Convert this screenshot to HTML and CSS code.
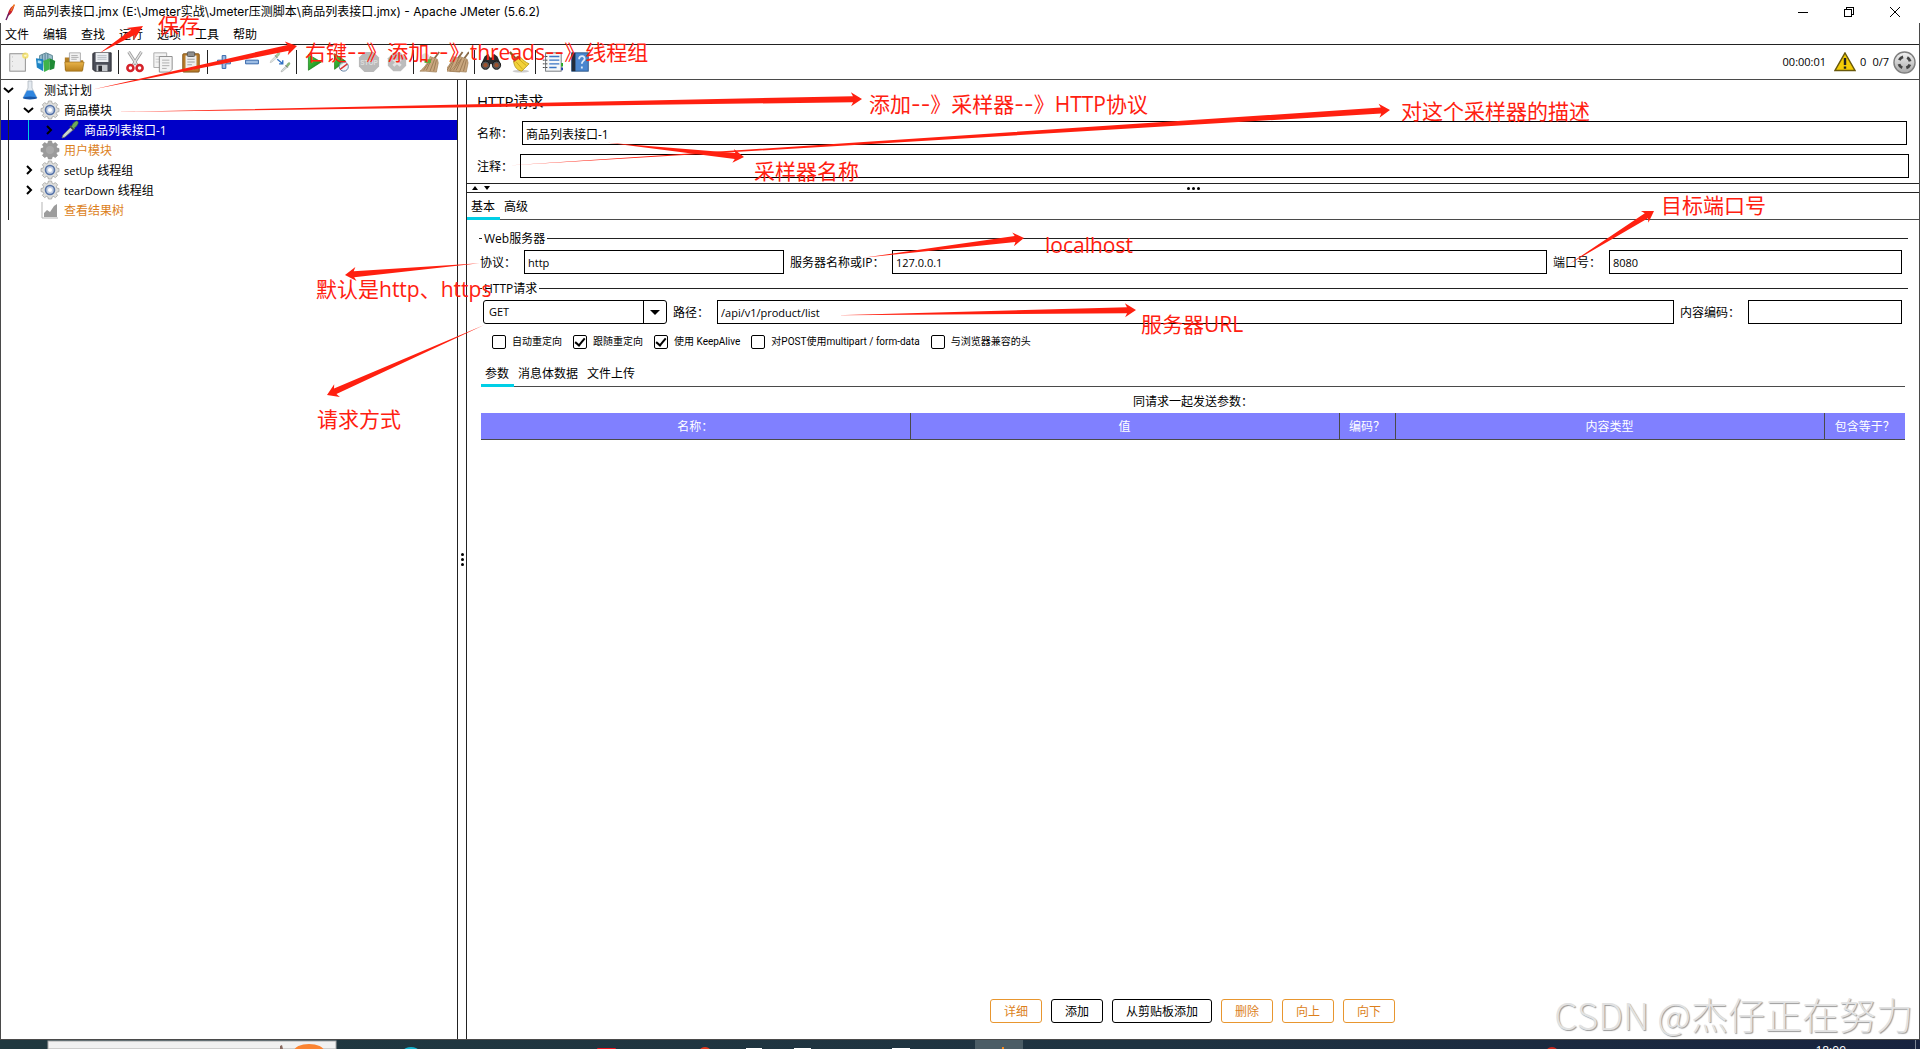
FILE: index.html
```html
<!DOCTYPE html>
<html lang="zh-CN">
<head>
<meta charset="utf-8">
<title>商品列表接口.jmx - Apache JMeter (5.6.2)</title>
<link rel="stylesheet" href="styles.css">
</head>
<body>
<svg width="0" height="0" class="defs" aria-hidden="true">
  <defs>
    <linearGradient id="steel" x1="0" y1="0" x2="0" y2="1"><stop offset="0" stop-color="#f4f4f4"/><stop offset="1" stop-color="#a9a9a9"/></linearGradient>
    <linearGradient id="gold" x1="0" y1="0" x2="0" y2="1"><stop offset="0" stop-color="#e9b44a"/><stop offset="1" stop-color="#b8801c"/></linearGradient>
    <linearGradient id="leaf" x1="0" y1="0" x2="1" y2="1"><stop offset="0" stop-color="#4fd04a"/><stop offset="1" stop-color="#0b7a0d"/></linearGradient>
    <symbol id="gear" viewBox="0 0 20 20">
      <g fill="#dededb" stroke="#9b9b98" stroke-width=".7">
        <path d="M8.4 1h3.2l.5 2.2 1.3.6 2-1.2 2.2 2.2-1.3 2 .6 1.3 2.1.4v3.1l-2.1.5-.6 1.4 1.3 1.9-2.2 2.2-2-1.2-1.3.6-.5 2H8.400l-.5-2-1.300-.6-2 1.200-2.200-2.200 1.300-1.900-.6-1.400L1 11.600V8.500l2.100-.4.6-1.300-1.300-2 2.200-2.200 2 1.200 1.300-.6z"/>
      </g>
      <circle cx="10" cy="10" r="4.500" fill="#c4d0e4" stroke="#5673a8" stroke-width="1.600"/>
      <circle cx="10" cy="10" r="2" fill="#fff"/>
    </symbol>
    <symbol id="gear-off" viewBox="0 0 20 20">
      <path fill="#9b9b9b" stroke="#8a8a8a" stroke-width=".6" d="M8.4 1h3.2l.5 2.2 1.3.6 2-1.2 2.2 2.2-1.3 2 .6 1.3 2.1.4v3.1l-2.1.5-.6 1.4 1.3 1.9-2.2 2.2-2-1.2-1.3.6-.5 2H8.400l-.5-2-1.300-.6-2 1.200-2.200-2.200 1.300-1.900-.6-1.400L1 11.600V8.500l2.100-.4.6-1.300-1.300-2 2.200-2.200 2 1.200 1.300-.6z"/>
      <circle cx="10" cy="10" r="4" fill="#a9a9a9"/>
    </symbol>
    <symbol id="dropper" viewBox="0 0 20 20">
      <path d="M2 18l1-3 9-9 2.500 2.500-9.500 8.500z" fill="#c9d6cf" stroke="#777" stroke-width=".8"/>
      <path d="M10 6l4 4" stroke="#444" stroke-width="1.800"/>
      <path d="M11.500 6.500c1-3 3-5 5-5.500 1.500 0 2 1 1.500 2.500-.7 2-2.500 4-4.500 5z" fill="#6fa95c" stroke="#3f7035" stroke-width=".6"/>
    </symbol>
    <symbol id="broom" viewBox="0 0 24 24">
      <path d="M22 1l-5 7" stroke="#8a6a48" stroke-width="2"/>
      <path d="M12 6l8 3 1 4-2 10-12-1-6 0c5-4 8-8 11-16z" fill="#c9a77f" stroke="#9a7850" stroke-width=".7"/>
      <path d="M14 8l-6 13M17 9l-5 13M19 10l-3 12M13 9l-8 12" stroke="#8d6c47" stroke-width=".8"/>
    </symbol>
  </defs>
</svg>

<div class="window">
  <header class="titlebar">
    <svg class="feather" viewBox="0 0 12 18"><path d="M10.500 2C7 3 4 8 3.500 13c3-1 6-5 7-11z" fill="#c8202e"/><path d="M10.500 1.500C9.500 3 8 5 7 8" stroke="#f07a22" stroke-width="1.500" fill="none"/><path d="M5 10l-3 7" stroke="#6a1a60" stroke-width="1.400"/></svg>
    <h1 class="title">商品列表接口.jmx (E:\Jmeter实战\Jmeter压测脚本\商品列表接口.jmx) - Apache JMeter (5.6.2)</h1>
    <button class="winbtn" aria-label="最小化"><svg viewBox="0 0 12 12"><path d="M1 6.500h10"/></svg></button>
    <button class="winbtn" aria-label="还原"><svg viewBox="0 0 12 12"><path d="M1.500 3.500h7v7h-7zM3.500 3.500v-2h7v7h-2"/></svg></button>
    <button class="winbtn" aria-label="关闭"><svg viewBox="0 0 12 12"><path d="M1 1l10 10M11 1L1 11"/></svg></button>
  </header>

  <div class="frame">
    <nav class="menubar">
      <button>文件</button><button>编辑</button><button>查找</button><button>运行</button><button>选项</button><button>工具</button><button>帮助</button>
    </nav>

    <div class="toolbar">
      <button class="tool" aria-label="新建"><svg viewBox="0 0 24 24"><rect x="3" y="3" width="17" height="19" fill="#eee" stroke="#888"/><path d="M6 6v14" stroke="#bbb" stroke-dasharray="1 4"/><circle cx="20" cy="5" r="3.500" fill="#f1dc5a" opacity=".8"/><circle cx="20" cy="5" r="1.300" fill="#fffbd0"/></svg></button>
      <button class="tool" aria-label="模板"><svg viewBox="0 0 24 24"><path d="M5 5l7-3 7 3v6H5z" fill="#9fc0ce" stroke="#58828f"/><path d="M8 4v6M11 3v7M14 3v7" stroke="#4f7c94"/><path d="M1 8l8 1v13l-7-4z" fill="#1d84c4"/><path d="M9 11l7-3v12l-6 3z" fill="#3fb34b"/><path d="M16 8l6 3-1 8-5 2z" fill="#1f8a35"/><path d="M3 10l4 1v3l-4-1z" fill="#a6dcf5"/></svg></button>
      <button class="tool" aria-label="打开"><svg viewBox="0 0 24 24"><path d="M2 7h7l2 3h11v11H2z" fill="#b47f25"/><path d="M7 2h12v12H7z" fill="#f2f2f2" stroke="#999" stroke-width=".8"/><path d="M9 5h7M9 7h8M9 9h6" stroke="#aaa"/><path d="M2 12h21l-2 10H3z" fill="url(#gold)" stroke="#9a6c18" stroke-width=".7"/></svg></button>
      <button class="tool" aria-label="保存"><svg viewBox="0 0 24 24"><path d="M3 2h19v20H4l-2-2V3z" fill="#4b4e58" stroke="#292b31"/><path d="M5 2h14v10H5z" fill="#eceff2"/><path d="M7 5h10M7 7h10M7 9h10" stroke="#b4bac2"/><path d="M6 15h12v7H6z" fill="#c5c8cc"/><path d="M8 16h4v6H8z" fill="#2c2e34"/></svg></button>
      <i class="sep"></i>
      <button class="tool" aria-label="剪切"><svg viewBox="0 0 24 24"><path d="M5 1l9 14M19 1l-9 14" stroke="#9a9a9a" stroke-width="3.200"/><path d="M5 1l9 14M19 1l-9 14" stroke="#e4e4e4" stroke-width="1.500"/><circle cx="7" cy="18.500" r="3.300" fill="none" stroke="#d5222a" stroke-width="2.800"/><circle cx="17" cy="18.500" r="3.300" fill="none" stroke="#d5222a" stroke-width="2.800"/></svg></button>
      <button class="tool" aria-label="复制"><svg viewBox="0 0 24 24"><path d="M2 2h14v16H2z" fill="#f3f3f3" stroke="#aaa"/><path d="M4 6h9M4 9h9M4 12h9" stroke="#ccc"/><path d="M8 6h14v14l-3 3H8z" fill="#f3f3f3" stroke="#888"/><path d="M11 10h8M11 13h8M11 16h8M11 19h5" stroke="#aaa"/></svg></button>
      <button class="tool" aria-label="粘贴"><svg viewBox="0 0 24 24"><rect x="3" y="3" width="18" height="20" rx="1" fill="#b97d2b" stroke="#7f5116"/><path d="M6 5h12v12l-3 3H6z" fill="#eee"/><rect x="8" y="1" width="8" height="5" rx="1" fill="#8f8f8f" stroke="#555"/><path d="M8 9h8M8 12h8M8 15h5" stroke="#999"/></svg></button>
      <i class="sep"></i>
      <button class="tool" aria-label="展开"><svg viewBox="0 0 24 24"><path d="M10 5h4v5h5v4h-5v5h-4v-5H5v-4h5z" fill="#9dbde4" stroke="#2c5ea5"/></svg></button>
      <button class="tool" aria-label="折叠"><svg viewBox="0 0 24 24"><path d="M5 10h14v4H5z" fill="#9dbde4" stroke="#2c5ea5"/></svg></button>
      <button class="tool" aria-label="切换"><svg viewBox="0 0 24 24"><g opacity=".6"><use href="#dropper" x="0" y="1" width="13" height="13"/></g><g opacity=".8"><use href="#dropper" x="12" y="12" width="12" height="12"/></g><path d="M9 9l6 5m0-4v4h-4" fill="none" stroke="#2f6fc4" stroke-width="1.500"/></svg></button>
      <i class="sep"></i>
      <button class="tool" aria-label="启动"><svg viewBox="0 0 24 24"><path d="M7 4l14 8-14 9z" fill="url(#leaf)" stroke="#087008" stroke-width=".7"/></svg></button>
      <button class="tool" aria-label="不停顿开始"><svg viewBox="0 0 24 24"><path d="M5 3l12 8-12 9z" fill="url(#leaf)" stroke="#087008" stroke-width=".7"/><circle cx="15" cy="17" r="5" fill="#e8eef4" fill-opacity=".7" stroke="#5e7fa2"/><path d="M11 20l8-6" stroke="#d33" stroke-width="1.500"/></svg></button>
      <button class="tool" aria-label="停止" disabled><svg viewBox="0 0 24 24"><path d="M7 1h10l6 6v10l-6 6H7l-6-6V7z" fill="#b9b9b9"/><text x="12" y="15" text-anchor="middle" class="stop-word">STOP</text></svg></button>
      <button class="tool" aria-label="关闭" disabled><svg viewBox="0 0 24 24"><path d="M8 2h8l6 6v8l-6 6H8l-6-6V8z" fill="#bcbcbc"/><path d="M8 9l8 7M16 9l-8 7" stroke="#e2e2e2" stroke-width="3"/></svg></button>
      <i class="sep"></i>
      <button class="tool" aria-label="清除"><svg viewBox="0 0 24 24"><use href="#broom" width="24" height="24"/><circle cx="7" cy="7" r="4.500" fill="#d7d7d7" opacity=".8"/><path d="M6 9h7v4H6z" fill="#5fae3b"/></svg></button>
      <button class="tool" aria-label="清除全部"><svg viewBox="0 0 24 24"><use href="#broom" x="-5" width="24" height="24"/><use href="#broom" x="2" width="24" height="24"/></svg></button>
      <i class="sep"></i>
      <button class="tool" aria-label="查找"><svg viewBox="0 0 24 24"><path d="M5 6l4-3 2 4h2l2-4 4 3 4 9-5 4-6-5-6 5-5-4z" fill="#2b2b2d"/><circle cx="6" cy="15.500" r="4.500" fill="#555" stroke="#111"/><circle cx="18" cy="15.500" r="4.500" fill="#555" stroke="#111"/><circle cx="6" cy="15.500" r="2.300" fill="#a0522d"/><circle cx="18" cy="15.500" r="2.300" fill="#a0522d"/></svg></button>
      <button class="tool" aria-label="重置查找"><svg viewBox="0 0 24 24"><path d="M2 1l6 7" stroke="#8a5f1c" stroke-width="2.500"/><ellipse cx="14" cy="22" rx="9" ry="1.500" fill="#ccc"/><path d="M6 11l7-5c3 4 6 6 10 8l-8 8c-5-1-8-4-9-11z" fill="#f2d23a" stroke="#a98a10" stroke-width=".8"/><path d="M9 12l7 8M12 9l8 7" stroke="#c9a51c"/><path d="M5 9l6-4 2 2-6 5z" fill="#c8462a"/></svg></button>
      <i class="sep"></i>
      <button class="tool" aria-label="函数助手"><svg viewBox="0 0 24 24"><rect x="5" y="2" width="17" height="20" fill="#f5f7f9" stroke="#6d7277"/><path d="M9 6h11M9 10h11M9 14h11M9 18h8" stroke="#3a75c4" stroke-width="1.400"/><path d="M2 6h5M2 10h5M2 14h5M2 18h5" stroke="#333" stroke-dasharray="2 1"/><path d="M22 13h2v4h-2z" fill="#2a2"/><path d="M22 18h2v3h-2z" fill="#24a"/></svg></button>
      <button class="tool" aria-label="帮助"><svg viewBox="0 0 24 24"><rect x="3" y="2" width="18" height="20" fill="#4a86cf" stroke="#285387"/><path d="M3 2h4v20H3z" fill="#222c3a"/><path d="M11 9c0-5 7-4 6 0-.5 2-3 2-3 5M14 17v2" fill="none" stroke="#dfebfa" stroke-width="2"/></svg></button>
      <div class="status">
        <span class="clock">00:00:01</span>
        <svg class="warn" viewBox="0 0 22 20"><path d="M11 1l10 17.500H1z" fill="#f3cc06" stroke="#69590a" stroke-width="1.500"/><path d="M11 6v7M11 14.500v2.200" stroke="#222" stroke-width="2.400"/></svg>
        <span class="errors">0</span>
        <span class="threads">0/7</span>
        <svg class="ring" viewBox="0 0 24 24"><circle cx="12" cy="12" r="11" fill="url(#steel)" stroke="#808080" stroke-width="1.500"/><circle cx="12" cy="12" r="6" fill="none" stroke="#444" stroke-width="3" stroke-dasharray="5 4.425" stroke-dashoffset="-2.200"/></svg>
      </div>
    </div>

    <main class="main">
      <aside class="tree">
        <div class="node"><svg class="twisty" viewBox="0 0 15 20"><path d="M3 8l4.500 4L12 8"/></svg><span class="pic"><svg viewBox="0 0 20 20"><path d="M8 1h4v7l5 10H3l5-10z" fill="#e4eaf0" stroke="#a8b0b8" stroke-width=".7"/><path d="M7 10.500h6L17 18H3z" fill="#2f86e0"/><ellipse cx="10" cy="18" rx="7" ry="1.500" fill="#1857a8"/></svg></span><span class="name-text">测试计划</span></div>
        <div class="node"><i class="guide"></i><svg class="twisty" viewBox="0 0 15 20"><path d="M3 8l4.500 4L12 8"/></svg><span class="pic"><svg><use href="#gear"/></svg></span><span class="name-text">商品模块</span></div>
        <div class="node selected"><i class="guide"></i><i class="guide near"></i><svg class="twisty" viewBox="0 0 15 20"><path d="M6 6l4 4-4 4"/></svg><span class="pic"><svg><use href="#dropper"/></svg></span><span class="name-text">商品列表接口-1</span></div>
        <div class="node disabled"><i class="guide"></i><i class="twisty"></i><span class="pic"><svg><use href="#gear-off"/></svg></span><span class="name-text">用户模块</span></div>
        <div class="node"><i class="guide"></i><svg class="twisty" viewBox="0 0 15 20"><path d="M6 6l4 4-4 4"/></svg><span class="pic"><svg><use href="#gear"/></svg></span><span class="name-text"><span class="latin">setUp</span> 线程组</span></div>
        <div class="node"><i class="guide"></i><svg class="twisty" viewBox="0 0 15 20"><path d="M6 6l4 4-4 4"/></svg><span class="pic"><svg><use href="#gear"/></svg></span><span class="name-text"><span class="latin">tearDown</span> 线程组</span></div>
        <div class="node disabled"><i class="guide"></i><i class="twisty"></i><span class="pic"><svg viewBox="0 0 20 20"><path d="M2 2v16h16" fill="none" stroke="#b5b5b5"/><path d="M4 17v-4l3-3 3 2 4-6 3-2v13z" fill="#9c9c9c"/></svg></span><span class="name-text">查看结果树</span></div>
      </aside>

      <div class="divider-v"><i></i><i></i><i></i></div>

      <section class="editor">
        <div class="heading">
          <h2>HTTP请求</h2>
          <div class="field name"><label for="name">名称：</label><input id="name" class="cjk" value="商品列表接口-1"></div>
          <div class="field comment"><label for="comment">注释：</label><input id="comment"></div>
        </div>
        <div class="divider-h">
          <svg class="carets" viewBox="0 0 20 8"><path d="M1 6h6L4 2zM13 2h6l-3 4z"/></svg>
          <span class="dots"><i></i><i></i><i></i></span>
        </div>
        <div class="tabs"><button class="tab active">基本</button><button class="tab">高级</button></div>

        <div class="panel">
          <fieldset>
            <legend>Web服务器</legend>
            <div class="field">
              <label class="w-short" for="proto">协议：</label><input id="proto" class="in-proto" value="http">
              <label class="w-host" for="host">服务器名称或IP：</label><input id="host" value="127.0.0.1">
              <label class="w-port" for="port">端口号：</label><input id="port" class="in-port" value="8080">
            </div>
          </fieldset>
          <fieldset class="request">
            <legend>HTTP请求</legend>
            <div class="field second">
              <span class="combo"><select aria-label="请求方法"><option>GET</option><option>POST</option></select></span>
              <label class="w-short" for="path">路径：</label><input id="path" value="/api/v1/product/list">
              <label class="w-enc" for="enc">内容编码：</label><input id="enc" class="in-enc">
            </div>
            <div class="checks">
              <label><input type="checkbox">自动重定向</label>
              <label><input type="checkbox" checked>跟随重定向</label>
              <label><input type="checkbox" checked>使用 KeepAlive</label>
              <label><input type="checkbox">对POST使用multipart / form-data</label>
              <label><input type="checkbox">与浏览器兼容的头</label>
            </div>
          </fieldset>
          <div class="body">
            <div class="tabs"><button class="tab active">参数</button><button class="tab">消息体数据</button><button class="tab">文件上传</button></div>
            <table>
              <caption>同请求一起发送参数：</caption>
              <colgroup><col><col><col class="c-enc"><col><col class="c-eq"></colgroup>
              <thead><tr><th>名称：</th><th>值</th><th>编码？</th><th>内容类型</th><th>包含等于？</th></tr></thead>
            </table>
          </div>
          <div class="actions">
            <button class="off">详细</button><button>添加</button><button>从剪贴板添加</button><button class="off">删除</button><button class="off">向上</button><button class="off">向下</button>
          </div>
        </div>
      </section>
    </main>
  </div>

  <footer class="taskbar">
    <svg width="1920" height="9" viewBox="0 0 1920 9">
      <rect x="48" y="1" width="288" height="8" fill="#f1f1f1" stroke="#aaa"/>
      <path d="M280 9V6l2-1 1 4z" fill="#8a6a60"/><ellipse cx="309" cy="11" rx="15" ry="7" fill="#fb8432"/>
      <ellipse cx="411" cy="10" rx="7" ry="3" fill="#17b5d0"/>
      <rect x="597" y="8" width="19" height="2" rx="1" fill="#e8141e"/><ellipse cx="705" cy="10" rx="5" ry="3" fill="#e03a20"/>
      <path d="M746 8h16v1h-16zM794 8h17v1h-17zM892 8h18v1h-18z" fill="#fff"/>
      <rect x="975" width="48" height="9" fill="#4b5d66"/><rect x="1002" y="7" width="2" height="2" fill="#f58a1c"/>
      <ellipse cx="1552" cy="10" rx="5" ry="3" fill="#c52a20"/>
      <path d="M1915.500 0v9" stroke="#7d8694"/>
    </svg>
    <time class="taskclock">18:09</time>
  </footer>
</div>

<svg class="arrows" width="1920" height="1049" viewBox="0 0 1920 1049" aria-hidden="true">
  <path transform="translate(143 26) rotate(-32)" d="M-51 0L-12-3-15-7 0 0-15 7-12 3z"/>
  <path transform="translate(297 46) rotate(-12)" d="M-209 0L-9-3-11-7 0 0-11 7-9 3z"/>
  <path transform="translate(862 99) rotate(-1)" d="M-747 0L-9-3-11-7 0 0-11 7-9 3z"/>
  <path transform="translate(1390 110) rotate(-3.600)" d="M-884 0L-9-3-11-7 0 0-11 7-9 3z"/>
  <path transform="translate(744 157) rotate(6)" d="M-137 0L-9-3-11-7 0 0-11 7-9 3z"/>
  <path transform="translate(1024 238) rotate(-7)" d="M-162 0L-9-3-11-7 0 0-11 7-9 3z"/>
  <path transform="translate(1654 211) rotate(-32)" d="M-101 0L-9-3-11-7 0 0-11 7-9 3z"/>
  <path transform="translate(345 275) rotate(175)" d="M-135 0L-9-3-11-7 0 0-11 7-9 3z"/>
  <path transform="translate(1136 310) rotate(-1)" d="M-300 0L-9-3-11-7 0 0-11 7-9 3z"/>
  <path transform="translate(327 395) rotate(156)" d="M-172 0L-9-3-11-7 0 0-11 7-9 3z"/>
</svg>
<span class="note n-save">保存</span>
<span class="note n-threads">右键<b>--</b>》添加<b>--</b>》threads<b>--</b>》线程组</span>
<span class="note n-http">添加<b>--</b>》采样器<b>--</b>》HTTP协议</span>
<span class="note n-desc">对这个采样器的描述</span>
<span class="note n-name">采样器名称</span>
<span class="note n-port">目标端口号</span>
<span class="note n-host">localhost</span>
<span class="note n-proto">默认是http、https</span>
<span class="note n-method">请求方式</span>
<span class="note n-url">服务器URL</span>
<span class="watermark">CSDN @杰仔正在努力</span>
</body>
</html>
```
FILE: styles.css
```css
* { box-sizing: border-box; }

body {
  margin: 0;
  position: relative;
  background: #fff;
  color: #000;
  font: 12px/20px "Open Sans", "Noto Sans CJK SC", sans-serif;
}

button, input, select {
  font: inherit;
  color: inherit;
  margin: 0;
  padding: 0;
  border: 0;
  background: none;
  border-radius: 0;
}

.defs { position: absolute; }
.latin { font-size: 11px; }

.window {
  display: flex;
  flex-direction: column;
  min-height: 100vh;
}

/* title bar */
.titlebar {
  display: flex;
  align-items: center;
  height: 23px;
  padding-right: 2px;
}
.feather { width: 12px; height: 18px; margin: 0 7px 0 4px; }
.title { flex: 1; margin: 0; font: 400 12px/20px Inter, "Noto Sans CJK SC", sans-serif; white-space: nowrap; }
.winbtn { width: 46px; height: 20px; line-height: 0; }
.winbtn svg { width: 12px; height: 12px; fill: none; stroke: #000; shape-rendering: crispEdges; }

.frame {
  flex: 1;
  display: flex;
  flex-direction: column;
  border: 1px solid #4a4a4a;
  border-top: 0;
}

.menubar {
  display: flex;
  gap: 14px;
  height: 22px;
  padding-left: 4px;
  border-bottom: 1px solid #222;
}
.menubar button { height: 22px; padding-top: 2px; line-height: 20px; }

/* toolbar */
.toolbar {
  display: flex;
  align-items: center;
  height: 35px;
  padding: 0 3px;
  border-bottom: 1px solid #4a4a4a;
}
.tool { width: 28px; height: 28px; padding: 3px; line-height: 0; }
.tool svg { width: 22px; height: 22px; }
.stop-word { font: 700 7px "Liberation Sans", sans-serif; fill: #dcdcdc; }
.sep { width: 1px; height: 24px; margin: 0 2px; background: #222; }
.status {
  margin-left: auto;
  display: flex;
  align-items: center;
  font-size: 11px;
  white-space: nowrap;
}
.warn { width: 22px; height: 20px; margin: 0 4px 0 8px; }
.errors { margin-right: 6px; }
.threads { margin-right: 4px; }
.ring { width: 23px; height: 23px; }

.main { flex: 1; display: flex; }

/* tree */
.tree { flex: 0 0 456px; }
.node { display: flex; align-items: center; height: 20px; white-space: nowrap; }
.node.disabled { color: #dc7f1c; }
.node.selected { background: #0000c8; color: #fff; }
.name-text { padding-top: 2px; }
.guide { width: 20px; height: 20px; }
.guide::before { content: ""; display: block; width: 1px; height: 20px; margin-left: 7px; background: #222; }
.guide.near::before { background: #00cfe0; }
.twisty { width: 15px; height: 20px; fill: none; stroke: #000; stroke-width: 2; }
.pic { width: 28px; height: 20px; padding-left: 4px; line-height: 0; }
.pic svg { width: 20px; height: 20px; }

.divider-v {
  flex: 0 0 10px;
  border: solid #222;
  border-width: 0 1px;
  display: flex;
  flex-direction: column;
  align-items: center;
  justify-content: center;
  gap: 2px;
}
.divider-v i, .dots i { width: 3px; height: 3px; border-radius: 50%; background: #000; }

/* editor */
.editor { flex: 1; min-width: 0; display: flex; flex-direction: column; }
.heading { padding: 2px 10px 5px; }
.heading h2 { margin: 0; font-size: 15px; font-weight: 400; line-height: 39px; }
.field { display: flex; align-items: center; gap: 6px; }
.field label { white-space: nowrap; flex: none; padding-top: 2px; }
.field input {
  flex: 1;
  min-width: 0;
  height: 24px;
  padding: 0 3px;
  border: 1px solid #000;
  font-size: 11px;
}
.field input.cjk { font-size: 12px; padding-top: 2px; }
.heading .field { gap: 0; }
.name { padding-right: 2px; margin-bottom: 9px; }
.name label { width: 45px; }
.comment label { width: 43px; }

.divider-h {
  display: grid;
  grid-template-columns: 1fr auto 1fr;
  align-items: center;
  height: 10px;
  border: solid #222;
  border-width: 1px 0;
}
.carets { width: 20px; height: 8px; margin-left: 4px; }
.dots { display: flex; gap: 2px; }

.tabs { display: flex; height: 27px; border-bottom: 1px solid #4a4a4a; }
.tab { height: 27px; padding: 4px 5px 0 4px; line-height: 20px; border-bottom: 3px solid transparent; }
.tab.active { border-bottom-color: #00cfe6; }

.panel { flex: 1; display: flex; flex-direction: column; padding: 8px 11px 16px 12px; }
fieldset {
  min-width: 0;
  margin: 0;
  padding: 2px 6px 0 1px;
  border: 0;
  border-top: 1px solid #222;
}
legend { margin-left: 2px; padding: 1px 2px 0; height: 20px; }
.request { margin-top: 4px; }
.w-short { width: 38px; }
.w-host { width: 96px; }
.w-port { width: 50px; }
.w-enc { width: 62px; }
.field .in-proto { flex: 0 0 260px; }
.field .in-port { flex: 0 0 293px; }
.field .in-enc { flex: 0 0 154px; }
.second { padding-left: 3px; }

.combo { position: relative; flex: 0 0 184px; height: 24px; }
.combo select {
  appearance: none;
  width: 100%;
  height: 24px;
  padding-left: 5px;
  border: 1px solid #000;
  border-radius: 3px;
  font-size: 11px;
  background: linear-gradient(#000, #000) right 22px top / 1px 100% no-repeat;
}
.combo::after {
  content: "";
  position: absolute;
  right: 7px;
  top: 10px;
  border: 5px solid transparent;
  border-top-color: #000;
  border-bottom: 0;
  pointer-events: none;
}

.checks {
  display: flex;
  gap: 11px;
  margin-top: 10px;
  padding-left: 12px;
  font: 10px/16px Roboto, "Noto Sans CJK SC", sans-serif;
  white-space: nowrap;
}
.checks label { display: flex; align-items: center; gap: 6px; }
.checks input {
  appearance: none;
  display: grid;
  place-items: center;
  width: 14px;
  height: 14px;
  border: 1px solid #000;
  border-radius: 2px;
}
.checks input:checked::before {
  content: "";
  width: 4px;
  height: 8px;
  margin-bottom: 2px;
  border: solid #000;
  border-width: 0 2px 2px 0;
  transform: rotate(40deg);
}

.body { margin: 10px 3px 0 2px; }
table { width: 100%; table-layout: fixed; border-collapse: collapse; }
caption { height: 26px; padding-top: 5px; line-height: 20px; }
.c-enc { width: 56px; }
.c-eq { width: 81px; }
th {
  height: 26px;
  padding: 2px 0 0;
  font-weight: 400;
  line-height: 20px;
  color: #fff;
  background: #8080ff;
  border-bottom: 1px solid #4a4a4a;
  white-space: nowrap;
}
th + th { border-left: 1px solid #4a4a4a; }

.actions { margin-top: auto; display: flex; justify-content: center; gap: 9px; padding-right: 2px; }
.actions button { height: 24px; padding: 2px 13px 0; line-height: 20px; border: 1px solid #000; border-radius: 3px; }
.actions .off { color: #dc7f1c; border-color: #e8962f; }

/* taskbar */
.taskbar {
  position: relative;
  height: 9px;
  overflow: hidden;
  background: linear-gradient(90deg, #20383f, #1f3341 60%, #18233f);
}
.taskbar svg { display: block; }
.taskclock { position: absolute; right: 74px; top: 4px; color: #fff; font: 12px/14px "Open Sans", sans-serif; }

/* annotations */
.arrows { position: absolute; left: 0; top: 0; fill: #ff2010; pointer-events: none; }
.note {
  position: absolute;
  color: #ff2010;
  font-size: 21px;
  line-height: 30px;
  white-space: nowrap;
}
.note b { font-family: Inter, sans-serif; font-weight: 400; }
.n-save { left: 158px; top: 10px; }
.n-threads { left: 305px; top: 37px; }
.n-http { left: 869px; top: 89px; }
.n-desc { left: 1401px; top: 96px; }
.n-name { left: 754px; top: 156px; }
.n-port { left: 1661px; top: 190px; }
.n-host { left: 1045px; top: 230px; }
.n-proto { left: 316px; top: 274px; }
.n-method { left: 317px; top: 404px; }
.n-url { left: 1141px; top: 309px; }
.watermark {
  position: absolute;
  right: 7px;
  bottom: 8px;
  color: #e2e2e2;
  font: 300 37px/54px "Noto Sans CJK SC", sans-serif;
  text-shadow: 1px 1px 1px #999;
  white-space: nowrap;
}
```
